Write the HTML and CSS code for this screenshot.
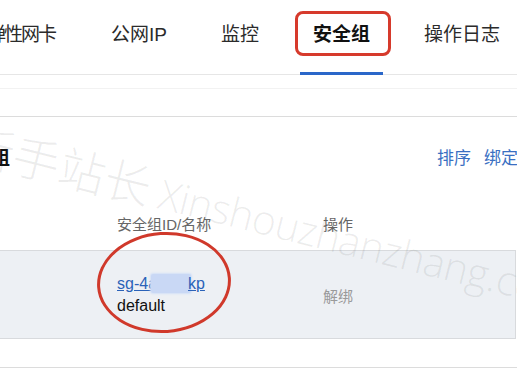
FILE: index.html
```html
<!DOCTYPE html>
<html lang="zh-CN">
<head>
<meta charset="utf-8">
<title>安全组</title>
<link rel="stylesheet" href="styles.css">
</head>
<body>
<div class="page">
  <nav class="tabs">
    <div class="tab first">弹性网卡</div>
    <div class="tab">公网IP</div>
    <div class="tab">监控</div>
    <div class="tab active">安全组<span class="mark-rect"></span></div>
    <div class="tab">操作日志</div>
  </nav>
  <div class="strip"></div>
  <div class="head-row">
    <h2 class="title">安全组</h2>
    <div class="actions">
      <a class="act">排序</a>
      <a class="act">绑定</a>
    </div>
  </div>
  <div class="table">
    <div class="thead">
      <div class="cell"></div>
      <div class="cell th">安全组ID/名称</div>
      <div class="cell th">操作</div>
    </div>
    <div class="trow">
      <div class="cell"></div>
      <div class="cell idcell">
        <a class="sg-link">sg-4a<span class="blur"></span>kp</a>
        <div class="sg-name">default</div>
        <span class="mark-ellipse"></span>
      </div>
      <div class="cell op">解绑</div>
    </div>
    <div class="tail"></div>
  </div>
  <svg class="watermark" width="517" height="388" viewBox="0 0 517 388">
    <text x="-36" y="160" transform="rotate(14 -36 160)"><tspan class="wm-cn">新手站长</tspan><tspan class="wm-en" dx="10">Xinshouzhanzhang.com</tspan></text>
  </svg>
</div>
</body>
</html>
```

FILE: styles.css
```css
* { box-sizing: border-box; }
html, body { margin: 0; padding: 0; background: #fff; }
body {
  font-family: "Liberation Sans", "Noto Sans CJK SC", Arial, sans-serif;
  color: #222;
  width: 517px;
  height: 388px;
  overflow: hidden;
}
.page { position: relative; width: 517px; height: 388px; overflow: hidden; }

.tabs {
  display: flex;
  height: 75px;
  margin-left: -34px;
  gap: 28px;
  border-bottom: 1px solid #e6e6e6;
}
.tab {
  position: relative;
  height: 75px;
  padding: 24px 13px 0;
  font-size: 19px;
  line-height: 22px;
  color: #2b2b2b;
  white-space: nowrap;
}
.tab.first { letter-spacing: -2px; padding-left: 21px; padding-right: 15px; }
.tab.active {
  font-weight: bold;
  color: #111;
  border-bottom: 3px solid #2a67c9;
}
.mark-rect {
  position: absolute;
  left: -5px;
  right: -8px;
  top: 11px;
  height: 45px;
  border: 3px solid #d63a2c;
  border-radius: 8px;
}

.strip {
  margin-top: 13px;
  height: 29px;
  border-top: 1px solid #f2f2f2;
  border-bottom: 1px solid #dcdcdc;
}

.head-row {
  display: flex;
  justify-content: space-between;
  align-items: center;
  margin-top: 30px;
  height: 24px;
}
.title {
  margin: 0 0 0 -47px;
  font-size: 19px;
  line-height: 24px;
  font-weight: bold;
  color: #111;
}
.actions { display: flex; gap: 13px; margin-right: -1px; }
.act {
  font-size: 17px;
  line-height: 24px;
  color: #3a6fc2;
}

.table { margin-top: 28px; width: 517px; }
.thead, .trow {
  display: grid;
  grid-template-columns: 117px 206px 1fr;
}
.thead { height: 51px; align-items: center; }
.th { font-size: 15px; line-height: 20px; color: #666; }
.trow {
  width: 516px;
  height: 89px;
  background: #edf0f4;
  border-top: 1px solid #d8dadd;
  border-bottom: 1px solid #d8dadd;
  border-right: 1px solid #d8dadd;
  align-items: center;
}
.idcell { position: relative; padding-top: 1px; }
.sg-link {
  display: block;
  font-size: 16px;
  line-height: 22px;
  color: #2a62b8;
  text-decoration: underline;
  white-space: nowrap;
}
.blur {
  display: inline-block;
  width: 40px;
  height: 19px;
  margin-left: -6px;
  margin-right: -3px;
  vertical-align: -4px;
  background: #c9d8f5;
  border-radius: 2px;
  box-shadow: 0 0 2px 1px #d3e0f7;
}
.sg-name { font-size: 16px; line-height: 22px; color: #111; }
.op { font-size: 15px; color: #9a9a9a; padding-top: 2px; }
.mark-ellipse {
  position: absolute;
  left: -20px;
  top: -40px;
  width: 134px;
  height: 101px;
  border: 3.5px solid #d0392b;
  border-radius: 50%;
  transform: rotate(-4deg);
}
.tail { height: 29px; border-bottom: 1px solid #dcdcdc; }

.watermark {
  position: absolute;
  left: 0;
  top: 0;
  pointer-events: none;
}
.watermark text { fill: rgba(60, 60, 60, 0.09); }
.wm-cn { font-family: "Noto Sans CJK SC", sans-serif; font-size: 47px; font-weight: 300; }
.wm-en { font-family: "Open Sans", "Liberation Sans", sans-serif; font-size: 41px; font-weight: 300; letter-spacing: -0.5px; }
```
